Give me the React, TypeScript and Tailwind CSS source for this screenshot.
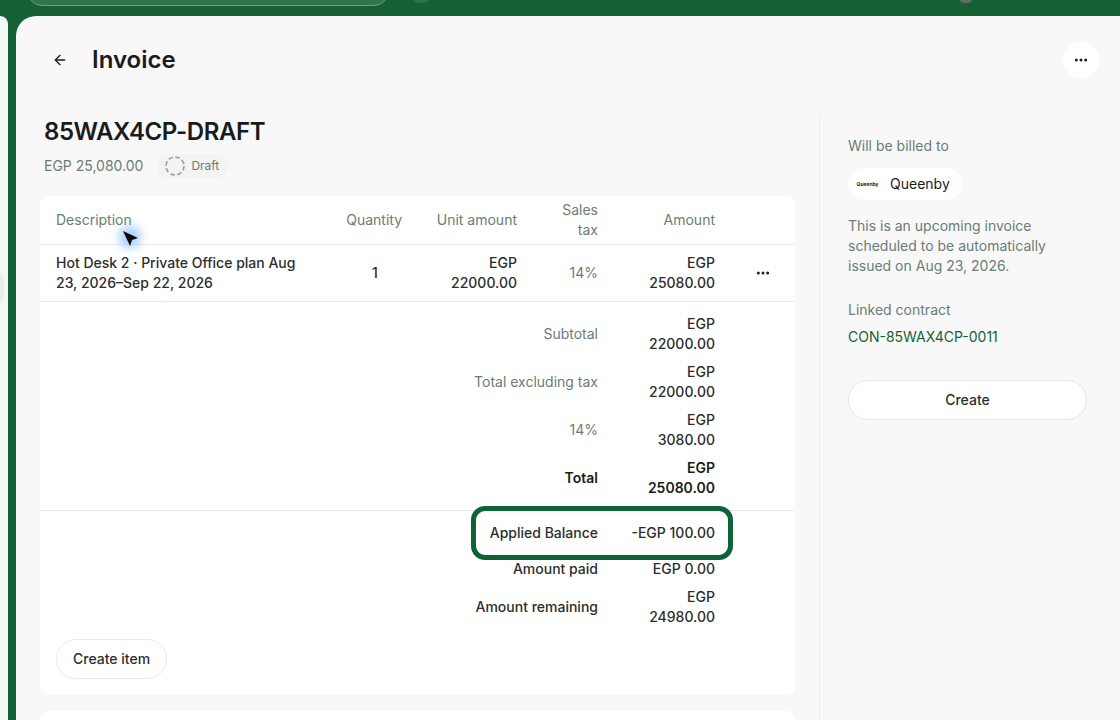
import React from 'react';
import { ArrowLeft, Ellipsis } from 'lucide-react';

const muted = 'text-[#6b7c77]';
const columns = 'grid-cols-[248px_98px_115px_81px_117px_96px]';

function TotalRow({ label, value, strong, muted: isMuted, className = '' }: { label: string; value: React.ReactNode; strong?: boolean; muted?: boolean; className?: string }) {
  return (
    <div className={`grid grid-cols-[558px_117px] items-center ${className}`}>
      <div className={`text-right ${strong ? 'font-semibold text-[#1a1c1c]' : isMuted ? muted : 'font-medium text-[#2b2e2e]'}`}>{label}</div>
      <div className={`text-right ${strong ? 'font-semibold text-[#1a1c1c]' : 'font-medium text-[#2b2e2e]'}`}>{value}</div>
    </div>
  );
}

function TableHead() {
  return (
    <div className={`grid h-[49px] ${columns} items-center border-b border-[#e9ebea] pl-4 text-right ${muted}`}>
      <div className="text-left">Description</div>
      <div>Quantity</div>
      <div>Unit amount</div>
      <div className="pl-8">Sales tax</div>
      <div>Amount</div>
      <div />
    </div>
  );
}

function InvoiceCard() {
  return (
    <div className="relative mt-[18px] rounded-lg bg-white pb-4 text-sm leading-5">
      <TableHead />
      <div className={`grid h-[57px] ${columns} items-center border-b border-[#e9ebea] pl-4 text-right font-medium text-[#2b2e2e]`}>
        <div className="text-left">Hot Desk 2 · Private Office plan Aug 23, 2026–Sep 22, 2026</div>
        <div className="pr-[2px] pl-[46px] text-center">1</div>
        <div>EGP<br />22000.00</div>
        <div className={`font-normal ${muted}`}>14%</div>
        <div>EGP<br />25080.00</div>
        <div className="flex justify-center text-[#1a1c1c]"><Ellipsis size={16} strokeWidth={2.5} /></div>
      </div>

      <div className="flex flex-col gap-2 border-b border-[#e9ebea] py-3">
        <TotalRow label="Subtotal" muted value={<>EGP<br />22000.00</>} />
        <TotalRow label="Total excluding tax" muted value={<>EGP<br />22000.00</>} />
        <TotalRow label="14%" muted value={<>EGP<br />3080.00</>} />
        <TotalRow label="Total" strong value={<>EGP<br />25080.00</>} />
      </div>

      <div className="flex flex-col pt-3">
        <TotalRow label="Applied Balance" value="-EGP 100.00" />
        <TotalRow label="Amount paid" value="EGP 0.00" className="mt-4" />
        <TotalRow label="Amount remaining" value={<>EGP<br />24980.00</>} className="mt-[8px]" />
      </div>

      <button className="mt-[12px] ml-4 flex h-10 items-center rounded-full border border-[#e9ebea] bg-white px-4 font-medium text-[#2b2e2e]">Create item</button>

      {/* highlight drawn over the applied balance row */}
      <div className="absolute top-[310px] left-[431px] h-[54px] w-[262px] rounded-[14px] border-[5px] border-[#0f6138]" />
    </div>
  );
}

function BilledTo() {
  return (
    <aside className={`mt-[11px] w-[300px] border-l border-[#ececec] pt-[21px] pr-[33px] pl-7 text-sm leading-5 ${muted}`}>
      <div>Will be billed to</div>
      <div className="mt-3 flex h-8 w-fit items-center gap-[11px] rounded-full bg-white pr-3 pl-2 text-[#1a1c1c]">
        <span className="w-[23px] text-center text-[5px] leading-none font-semibold whitespace-nowrap text-black">Queenby</span>
        <span>Queenby</span>
      </div>
      <p className="mt-[16px]">This is an upcoming invoice scheduled to be automatically issued on Aug 23, 2026.</p>
      <div className="mt-6">Linked contract</div>
      <div className="mt-[7px] text-[#156138]">CON-85WAX4CP-0011</div>
      <button className="mt-[33px] flex h-10 w-[239px] items-center justify-center rounded-full border border-[#e6e8e7] bg-white font-medium text-[#2b2e2e]">Create</button>
    </aside>
  );
}

export default function App() {
  return (
    <div className="relative flex h-[720px] w-[1120px] flex-col overflow-hidden bg-[#166036] font-['Inter',sans-serif]">
      {/* Top bar, cut off by the window */}
      <div className="relative h-4 shrink-0">
        <div className="absolute -top-6 left-[27px] h-[30px] w-[362px] rounded-full border border-[#6f9c83] bg-[#30734f]" />
        <div className="absolute -top-[23px] left-[408px] h-[26px] w-[26px] rounded-full bg-[#30734f]" />
        <div className="absolute -top-[5px] left-[960px] h-2 w-3 rounded-full bg-[#5c6f63]" />
      </div>

      <div className="flex min-h-0 flex-1 gap-2">
        {/* Sidebar edge */}
        <div className="relative w-2 rounded-tr-xl bg-[#f3f7f6]">
          <div className="absolute top-[258px] -left-[8px] h-7 w-3 rounded-full bg-[#e8eeec]" />
        </div>

        {/* Main panel */}
        <main className="flex min-w-0 flex-1 flex-col rounded-tl-[20px] bg-[#f8f8f8]">
          <header className="flex h-[88px] shrink-0 items-center pr-[21px] pl-[36px]">
            <ArrowLeft size={16} className="text-[#1a1c1c]" strokeWidth={2} />
            <h1 className="ml-[24px] text-2xl leading-8 font-semibold text-[#1a1c1c]">Invoice</h1>
            <button className="ml-auto flex h-9 w-9 items-center justify-center rounded-full bg-white text-[#1a1c1c]">
              <Ellipsis size={16} strokeWidth={2.5} />
            </button>
          </header>

          <div className="flex min-h-0 flex-1 pl-6">
            <section className="w-[779px] pr-6">
              <div className="pt-[12px]">
                <h2 className="pl-1 text-2xl leading-8 font-semibold tracking-[-0.018em] text-[#1a1c1c]">85WAX4CP-DRAFT</h2>
                <div className="mt-[6px] flex items-center gap-[14px] pl-1 text-sm leading-5">
                  <span className={muted}>EGP 25,080.00</span>
                  <span className={`flex h-6 items-center gap-[6px] rounded-full bg-[#f2f4f3] pr-[9px] pl-2 text-xs ${muted}`}>
                    <svg width="20" height="20" viewBox="0 0 20 20" fill="none">
                      <circle cx="10" cy="10" r="9" stroke="#9aa3a0" strokeWidth="1.75" strokeDasharray="4.5 2.6" />
                    </svg>
                    Draft
                  </span>
                </div>
              </div>
              <InvoiceCard />
              <div className="mt-4 h-20 rounded-lg bg-white" />
            </section>
            <BilledTo />
          </div>
        </main>
      </div>

      {/* Mouse pointer from the recording */}
      <div className="absolute top-[226px] left-[119px] h-[22px] w-[22px] rounded-full bg-[#4d9fff]/50 blur-[5px]" />
      <svg className="absolute top-[230px] left-[122px]" width="17" height="18" viewBox="0 0 17 18">
        <path d="M1 1 L16 8 L10 10 L8 16 Z" fill="#0b0b0b" />
      </svg>
    </div>
  );
}
